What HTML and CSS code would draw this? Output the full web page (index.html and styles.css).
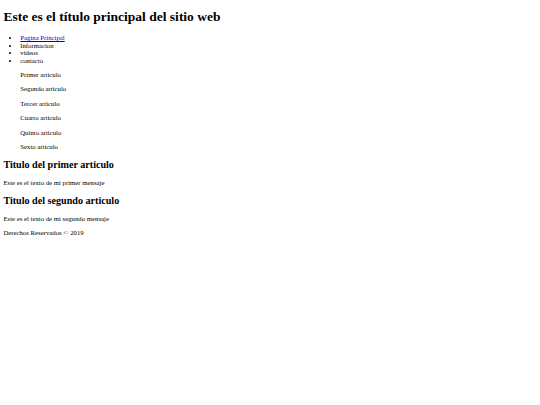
FILE: index.html
```html
<!DOCTYPE html>
<html lang="es">
<head>
<meta charset="utf-8">
<title>Sitio web</title>
<link rel="stylesheet" href="styles.css">
</head>
<body class="page">
<header class="site-header">
  <h1 class="site-title">Este es el título principal del sitio web</h1>
  <nav class="site-nav">
    <ul class="nav-list">
      <li class="nav-item"><a class="nav-link" href="#">Pagina Principal</a></li>
      <li class="nav-item">Informacion</li>
      <li class="nav-item">videos</li>
      <li class="nav-item">contacto</li>
    </ul>
  </nav>
</header>
<aside class="article-index">
  <p class="index-item">Primer articulo</p>
  <p class="index-item">Segundo articulo</p>
  <p class="index-item">Tercer articulo</p>
  <p class="index-item">Cuarto articulo</p>
  <p class="index-item">Quinto articulo</p>
  <p class="index-item">Sexto articulo</p>
</aside>
<main class="content">
  <article class="post">
    <h2 class="post-title">Titulo del primer articulo</h2>
    <p class="post-text">Este es el texto de mi primer mensaje</p>
  </article>
  <article class="post">
    <h2 class="post-title">Titulo del segundo articulo</h2>
    <p class="post-text">Este es el texto de mi segundo mensaje</p>
  </article>
</main>
<footer class="site-footer">
  <p class="footer-text">Derechos Reservados © 2019</p>
</footer>
</body>
</html>
```

FILE: styles.css
```css
html {
  background: #ffffff;
}

.page {
  margin: 3.375px;
  font-family: "Liberation Serif", "Times New Roman", serif;
  font-size: 6.75px;
  line-height: 7.6px;
  color: #000000;
}

.site-title {
  font-size: 13.5px;
  line-height: 15.6px;
  font-weight: bold;
  margin: 6px 0 9.05px;
}

.nav-list {
  margin: 6.75px 0;
  padding-left: 16.875px;
  list-style: disc;
}

.nav-link {
  color: #0000ee;
  text-decoration: underline;
}

.article-index {
  padding-left: 16.875px;
}

.index-item {
  margin: 6.75px 0;
}

.post-title {
  font-size: 10.125px;
  line-height: 11.6px;
  font-weight: bold;
  margin: 8.4px 0;
}

.post-text {
  margin: 6.75px 0;
}

.footer-text {
  margin: 6.75px 0;
}
```
